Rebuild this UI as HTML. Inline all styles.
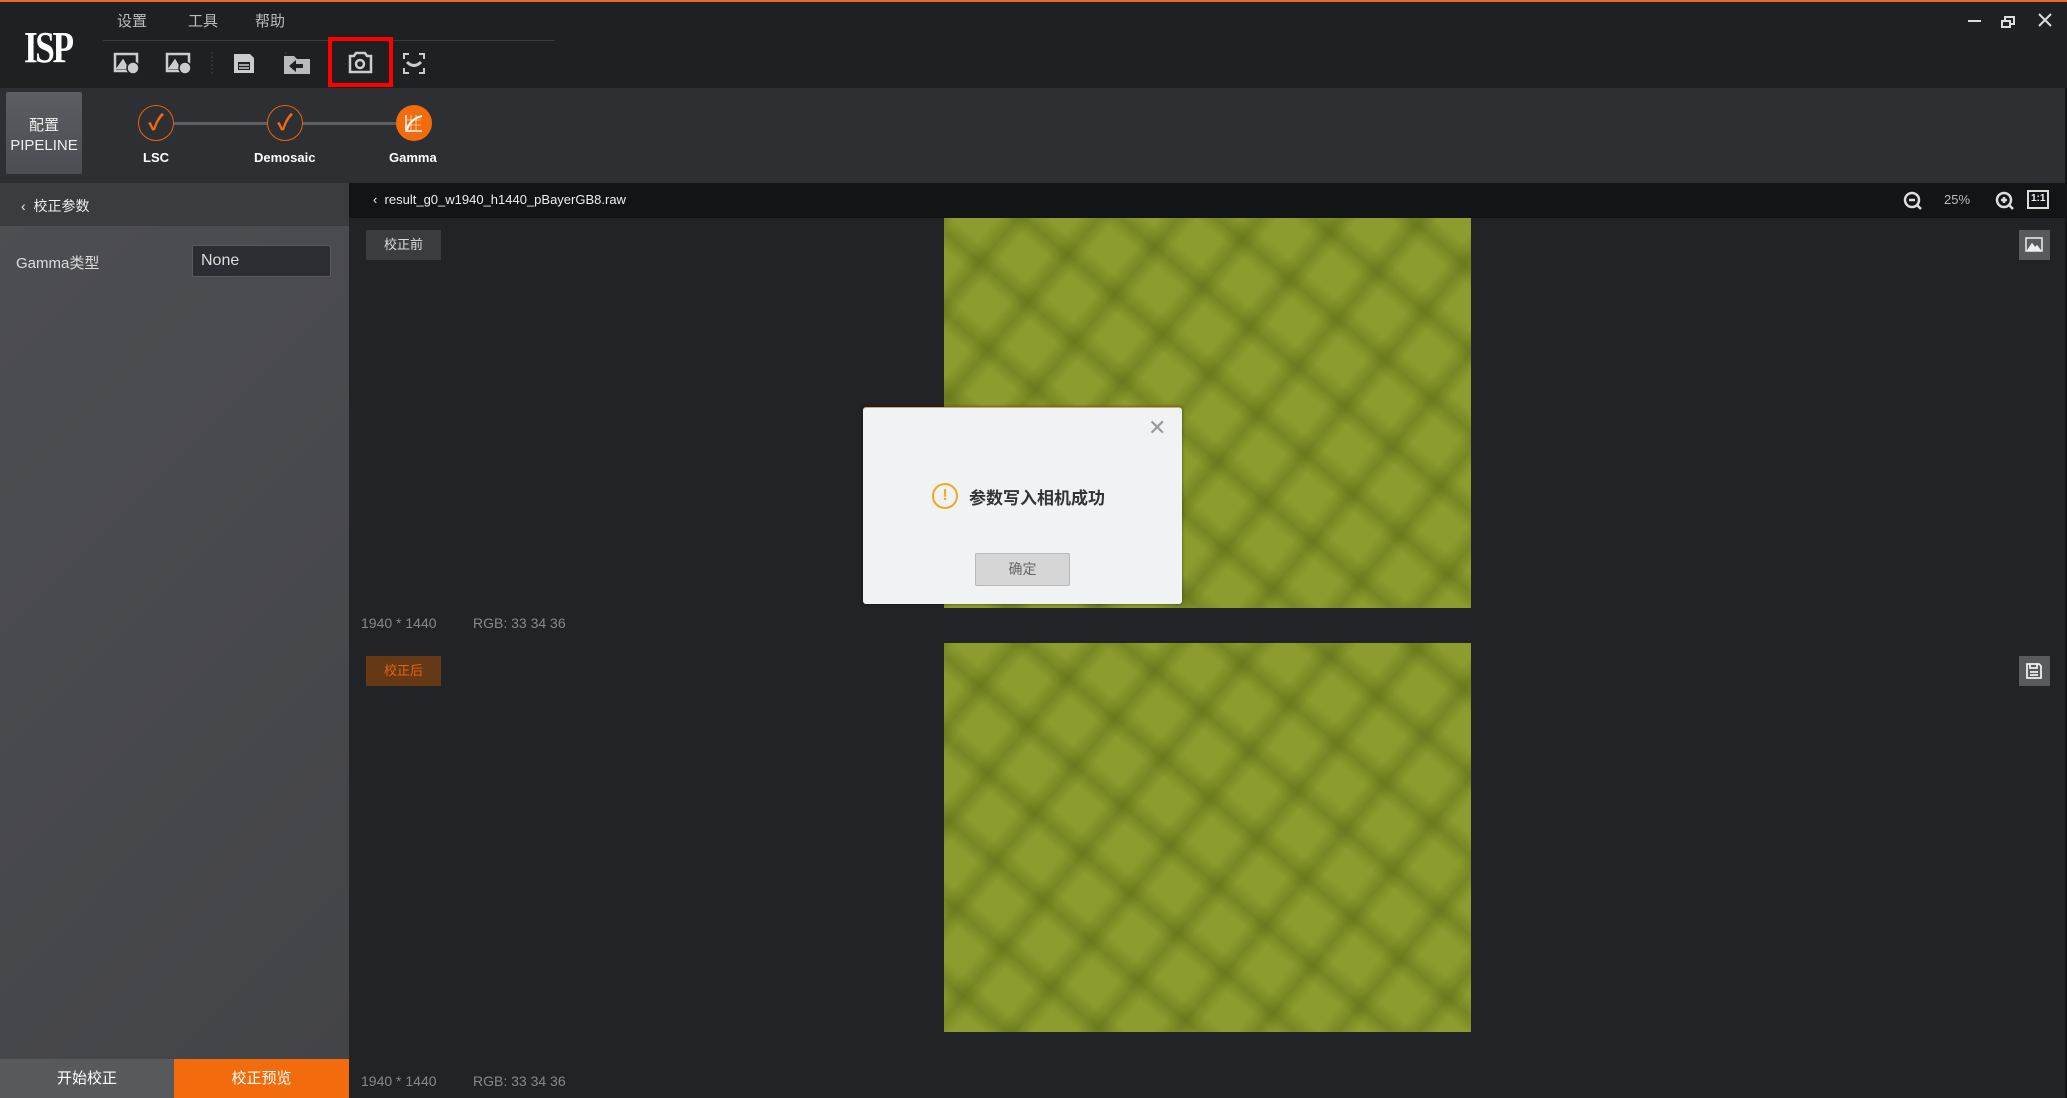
<!DOCTYPE html>
<html><head><meta charset="utf-8"><style>
*{margin:0;padding:0;box-sizing:border-box}
body{width:2067px;height:1098px;overflow:hidden;background:#222326;font-family:"Liberation Sans","Noto Sans CJK SC",sans-serif;position:relative;color:#ddd}
.a{position:absolute}
.img{background-color:#8c9c2e;background-image:
repeating-linear-gradient(40deg,rgba(80,95,15,0) 0px,rgba(80,95,15,0) 26px,rgba(80,95,15,.35) 40px,rgba(80,95,15,0) 56px,rgba(80,95,15,0) 62px),
repeating-linear-gradient(-50deg,rgba(80,95,15,0) 0px,rgba(80,95,15,0) 26px,rgba(80,95,15,.35) 40px,rgba(80,95,15,0) 56px,rgba(80,95,15,0) 62px);}
</style></head><body>
<div class="a" style="left:0;top:0;width:2067px;height:2px;background:#f26522"></div>
<div class="a" style="left:0;top:2px;width:2067px;height:86px;background:#1f2022"></div>
<div class="a" style="left:24px;top:22px;font-size:44px;font-weight:bold;color:#fff;font-family:'Liberation Serif',serif;letter-spacing:-3px;transform:scaleX(.8);transform-origin:left">ISP</div>
<div class="a" style="left:117px;top:10px;font-size:15px;color:#bbb">设置</div>
<div class="a" style="left:188px;top:10px;font-size:15px;color:#bbb">工具</div>
<div class="a" style="left:255px;top:10px;font-size:15px;color:#bbb">帮助</div>
<div class="a" style="left:103px;top:40px;width:452px;height:1px;background:#3a3b3e"></div>
<svg class="a" style="left:0;top:0" width="560" height="90" fill="none" stroke="#ccc" stroke-width="2.5">
<rect x="115" y="54" width="22" height="17"/><path d="M118 68l5-7 4 7z" fill="#ccc"/><circle cx="133" cy="68" r="6" fill="#ccc" stroke="#1f2022" stroke-width="1.5"/>
<rect x="167" y="54" width="22" height="17"/><path d="M170 68l5-7 4 7z" fill="#ccc"/><circle cx="185" cy="68" r="6" fill="#ccc" stroke="#1f2022" stroke-width="1.5"/>
<path d="M212 52v22M286 52v22" stroke="#444" stroke-dasharray="2 2" stroke-width="1"/>
<path d="M234 54h16l4 4v15h-20z" fill="#ccc" stroke="none"/><rect x="238" y="62" width="12" height="8" fill="#1f2022" stroke="none"/><path d="M239 65h10M239 68h10" stroke="#ccc" stroke-width="1.5"/>
<path d="M284 56h10l3 3h13v15h-26z" fill="#bbb" stroke="none"/><path d="M296 60l-7 6 7 6v-4h7v-4h-7z" fill="#1f2022" stroke="none"/>
<rect x="330" y="39" width="61" height="46" stroke="#f00" stroke-width="4"/>
<path d="M350 56h4l2-3h9l2 3h4v16h-21z"/><circle cx="360" cy="64" r="4"/>
<path d="M404 59v-5h5M419 54h5v5M424 68v5h-5M409 73h-5v-5" stroke-width="2"/><path d="M407 62q7 7 14 0" stroke-width="3"/>
</svg>
<div class="a" style="left:1968px;top:20px;width:13px;height:2px;background:#ddd"></div>
<svg class="a" style="left:2000px;top:12px" width="60" height="20" fill="none" stroke="#ddd" stroke-width="2"><rect x="2" y="9" width="8" height="6"/><path d="M5 9V5h9v7h-3"/><path d="M39 2l12 12M51 2l-12 12"/></svg>
<div class="a" style="left:0;top:88px;width:2067px;height:95px;background:#2e2f33"></div>
<div class="a" style="left:6px;top:92px;width:76px;height:82px;background:linear-gradient(#5c5d62,#4c4d52);border-radius:2px;text-align:center;color:#eee;font-size:15px;line-height:20px;padding-top:24px">配置<br>PIPELINE</div>
<div class="a" style="left:174px;top:122px;width:222px;height:3px;background:#5e5f63"></div>
<div class="a" style="left:138px;top:105px;width:36px;height:36px;border:1.5px solid #e8620f;border-radius:50%;background:#2e2f33;color:#f26c0d;font-size:22px;text-align:center;line-height:33px;font-weight:bold">✓</div>
<div class="a" style="left:267px;top:105px;width:36px;height:36px;border:1.5px solid #e8620f;border-radius:50%;background:#2e2f33;color:#f26c0d;font-size:22px;text-align:center;line-height:33px;font-weight:bold">✓</div>
<div class="a" style="left:396px;top:105px;width:36px;height:36px;border-radius:50%;background:#f26c0d"></div>
<svg class="a" style="left:404px;top:113px" width="20" height="20" fill="none" stroke="#fff" stroke-width="1.5"><path d="M2 2v16h16"/><path d="M3 17Q6 6 18 3" stroke-width="2"/><path d="M7 2v15M12 2v15M2 7h15M2 12h15" stroke-width=".6"/></svg>
<div class="a" style="left:143px;top:150px;font-size:13px;color:#fff;font-weight:bold">LSC</div>
<div class="a" style="left:254px;top:150px;font-size:13px;color:#fff;font-weight:bold">Demosaic</div>
<div class="a" style="left:389px;top:150px;font-size:13px;color:#fff;font-weight:bold">Gamma</div>
<div class="a" style="left:0;top:183px;width:349px;height:876px;background:linear-gradient(135deg,#4d4e53 0%,#48494e 50%,#434448 100%)"></div>
<div class="a" style="left:0;top:183px;width:349px;height:43px;background:#3b3c40"></div>
<div class="a" style="left:21px;top:196px;font-size:14px;color:#eee">‹&nbsp; 校正参数</div>
<div class="a" style="left:16px;top:252px;font-size:15px;color:#ddd">Gamma类型</div>
<div class="a" style="left:192px;top:245px;width:139px;height:32px;background:#2c2d32;border:1px solid #5a5b60;border-radius:2px;font-size:16px;color:#ddd;padding:6px 8px">None</div>
<div class="a" style="left:0;top:1059px;width:174px;height:39px;background:#58595d;color:#fff;font-size:15px;text-align:center;line-height:39px">开始校正</div>
<div class="a" style="left:174px;top:1059px;width:175px;height:39px;background:#f26c0d;color:#fff;font-size:15px;text-align:center;line-height:39px">校正预览</div>
<div class="a" style="left:349px;top:183px;width:1718px;height:35px;background:#131416"></div>
<div class="a" style="left:373px;top:192px;font-size:13px;color:#eee">‹&nbsp; result_g0_w1940_h1440_pBayerGB8.raw</div>
<svg class="a" style="left:1900px;top:189px" width="150" height="24" fill="none" stroke="#ddd" stroke-width="2.5"><circle cx="12" cy="11" r="7"/><path d="M17 16l4 4M9 11h6"/><circle cx="104" cy="11" r="7"/><path d="M109 16l4 4M101 11h6M104 8v6"/><rect x="128" y="2" width="20" height="17" stroke-width="2"/></svg>
<div class="a" style="left:1944px;top:192px;font-size:13px;color:#bbb">25%</div>
<div class="a" style="left:2031px;top:193px;font-size:10px;color:#eee;font-weight:bold">1:1</div>
<div class="a" style="left:2065px;top:88px;width:2px;height:1010px;background:#131416"></div>
<div class="a img" style="left:944px;top:218px;width:527px;height:390px"></div>
<div class="a img" style="left:944px;top:643px;width:527px;height:389px"></div>
<div class="a" style="left:366px;top:230px;width:75px;height:30px;background:#3b3c40;color:#ddd;font-size:13px;text-align:center;line-height:30px">校正前</div>
<div class="a" style="left:366px;top:656px;width:75px;height:30px;background:#653915;color:#e8620f;font-size:13px;text-align:center;line-height:30px">校正后</div>
<div class="a" style="left:361px;top:615px;font-size:14px;color:#888">1940 * 1440</div>
<div class="a" style="left:473px;top:615px;font-size:14px;color:#888">RGB: 33 34 36</div>
<div class="a" style="left:361px;top:1073px;font-size:14px;color:#888">1940 * 1440</div>
<div class="a" style="left:473px;top:1073px;font-size:14px;color:#888">RGB: 33 34 36</div>
<div class="a" style="left:2019px;top:230px;width:31px;height:30px;background:#595a5e"></div>
<svg class="a" style="left:2024px;top:235px" width="20" height="20" fill="none" stroke="#eee" stroke-width="1.5"><rect x="2" y="3" width="16" height="13"/><path d="M4 15l4-6 3 4 2-2 3 4z" fill="#eee"/></svg>
<div class="a" style="left:2019px;top:656px;width:31px;height:30px;background:#595a5e"></div>
<svg class="a" style="left:2024px;top:661px" width="20" height="20" fill="none" stroke="#eee" stroke-width="1.8"><path d="M3 3h12l2 2v12H3z"/><path d="M6 3v4h7V3M6 11h8M6 14h8"/></svg>
<div class="a" style="left:863px;top:407px;width:319px;height:197px;background:#f1f2f4;border-radius:3px;border-top:1px solid #e8a060;box-shadow:0 0 3px rgba(0,0,0,.5)"></div>
<div class="a" style="left:1148px;top:415px;font-size:22px;color:#999">✕</div>
<div class="a" style="left:932px;top:483px;width:26px;height:26px;border:2.5px solid #f5a623;border-radius:50%;color:#f5a623;font-size:16px;font-weight:bold;text-align:center;line-height:21px">!</div>
<div class="a" style="left:969px;top:484px;font-size:17px;color:#333;font-weight:bold">参数写入相机成功</div>
<div class="a" style="left:975px;top:553px;width:95px;height:33px;background:#d6d6d6;border:1px solid #b8b8b8;border-radius:2px;color:#666;font-size:14px;text-align:center;line-height:31px">确定</div>
</body></html>
